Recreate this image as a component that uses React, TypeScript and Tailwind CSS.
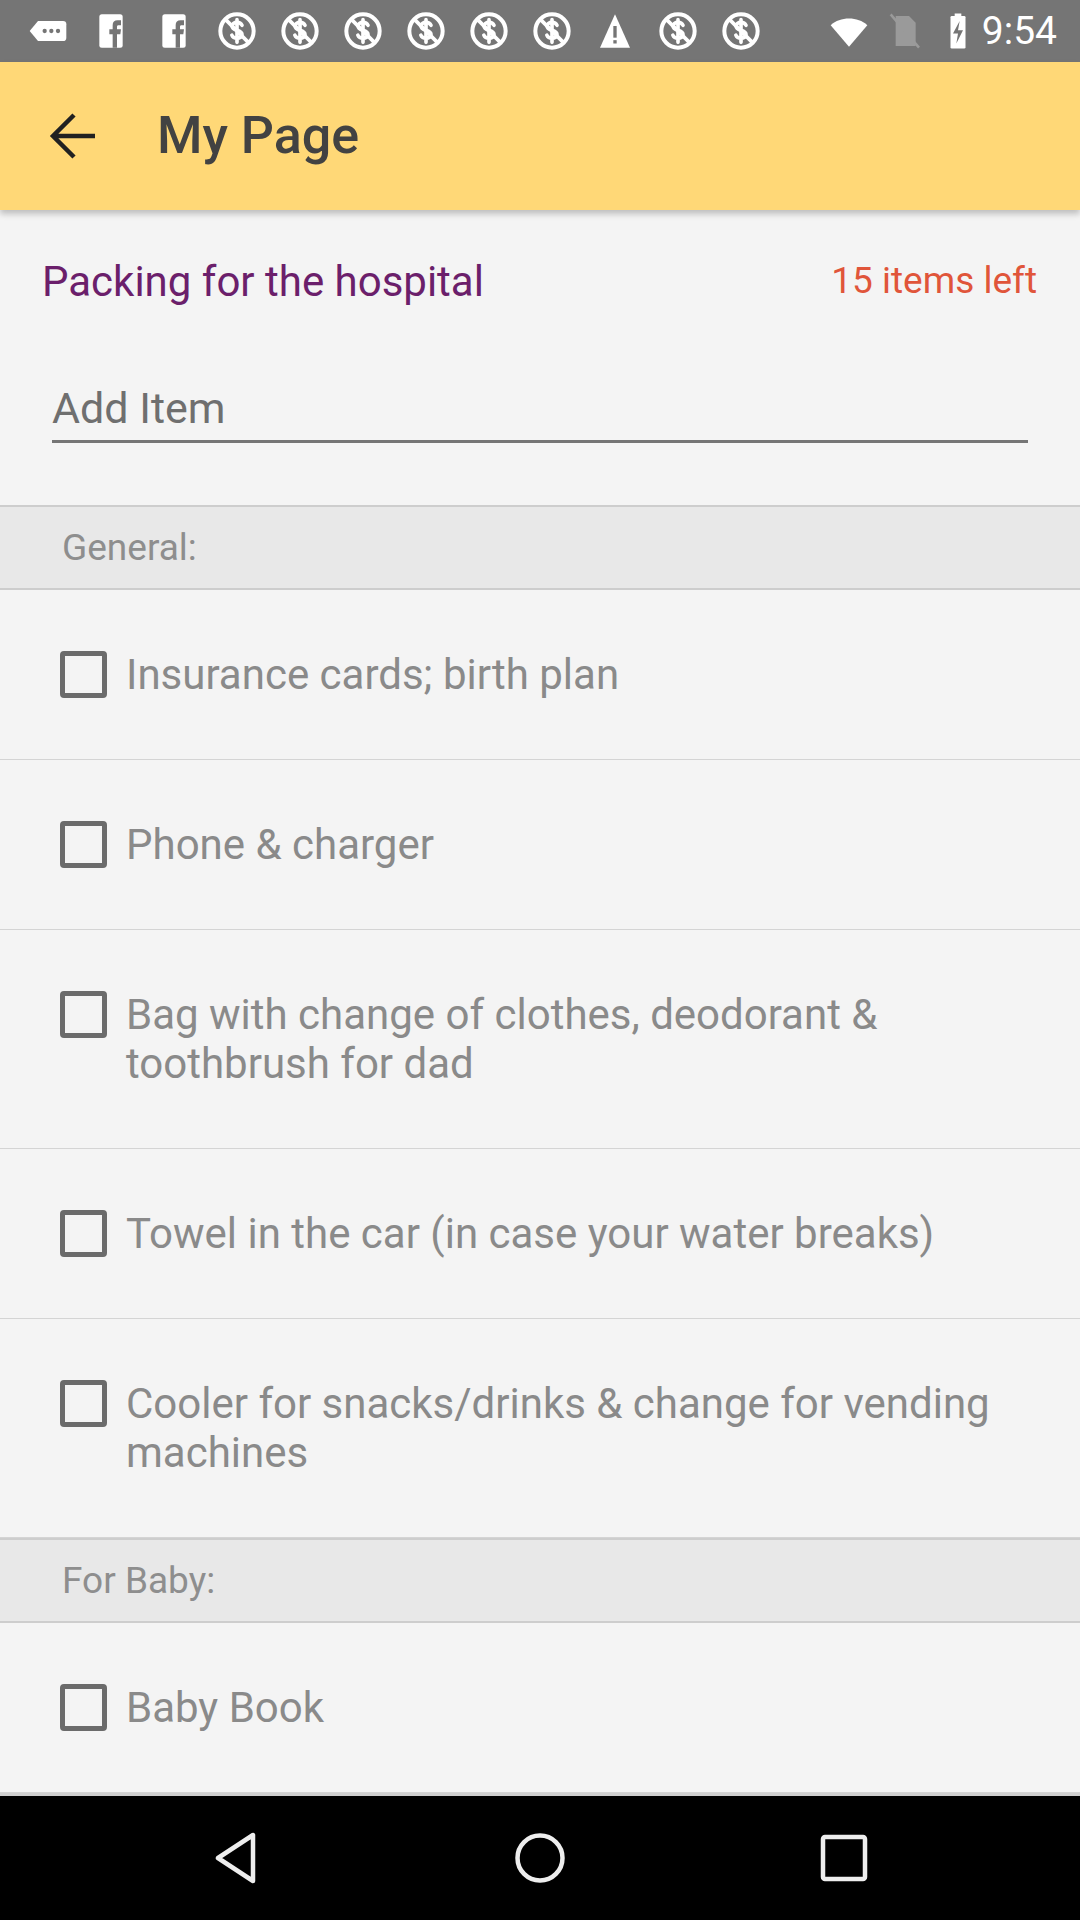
import React from "react";

type Item = { label: string };

const general: Item[] = [
    { label: "Insurance cards; birth plan" },
    { label: "Phone & charger" },
    { label: "Bag with change of clothes, deodorant & toothbrush for dad" },
    { label: "Towel in the car (in case your water breaks)" },
    { label: "Cooler for snacks/drinks & change for vending machines" },
];

const baby: Item[] = [{ label: "Baby Book" }];

function DollarIcon() {
    return (
        <svg width="40" height="40" viewBox="0 0 24 24" fill="none" stroke="white">
            <circle cx="12" cy="12" r="10" strokeWidth="2.4" />
            <path
                d="M15 8.6c-.5-1.1-1.6-1.8-3-1.8-1.7 0-2.9.9-2.9 2.3s1.2 1.9 2.9 2.4 3 1 3 2.5-1.3 2.4-3 2.4c-1.4 0-2.6-.7-3.1-1.9M12 5.2v13.6"
                strokeWidth="2.2"
                strokeLinecap="round"
            />
            <path d="M5.5 5.5l13 13" strokeWidth="2.2" />
        </svg>
    );
}

function FbIcon() {
    return (
        <svg width="40" height="40" viewBox="0 0 24 24">
            <rect x="5" y="2" width="14" height="20" rx="1.5" fill="white" />
            <path d="M13 22v-8h-2v-3h2V8.5C13 6.5 14 5.5 16 5.5h2v3h-1.5c-.6 0-.9.3-.9.9V11H18l-.4 3h-2v8z" fill="#757575" />
        </svg>
    );
}

function TagIcon() {
    return (
        <svg width="40" height="40" viewBox="0 0 24 24">
            <path d="M1 12l5-6h15a2 2 0 012 2v8a2 2 0 01-2 2H6z" fill="white" />
            <circle cx="10" cy="12" r="1.3" fill="#757575" />
            <circle cx="14" cy="12" r="1.3" fill="#757575" />
            <circle cx="18" cy="12" r="1.3" fill="#757575" />
        </svg>
    );
}

function WarnIcon() {
    return (
        <svg width="40" height="40" viewBox="0 0 24 24">
            <path d="M12 2L3 22h18z" fill="white" />
            <rect x="11" y="9" width="2" height="7" fill="#757575" />
            <rect x="11" y="17.5" width="2" height="2" fill="#757575" />
        </svg>
    );
}

function StatusBar() {
    const icons = [
        <TagIcon key="t" />,
        <FbIcon key="f1" />,
        <FbIcon key="f2" />,
        <DollarIcon key="d1" />,
        <DollarIcon key="d2" />,
        <DollarIcon key="d3" />,
        <DollarIcon key="d4" />,
        <DollarIcon key="d5" />,
        <DollarIcon key="d6" />,
        <WarnIcon key="w" />,
        <DollarIcon key="d7" />,
        <DollarIcon key="d8" />,
    ];
    return (
        <div className="h-[62px] bg-[#757575] flex items-center justify-between pl-[16px] pr-[23px]">
            <div className="flex items-center">
                {icons.map((icon, i) => (
                    <div key={i} className="w-[63px] flex justify-center">
                        {icon}
                    </div>
                ))}
            </div>
            <div className="flex items-center">
                <svg width="42" height="40" viewBox="0 0 24 24">
                    <path d="M1 8.5C4 5.8 7.8 4.5 12 4.5s8 1.3 11 4L12 21.5z" fill="white" />
                </svg>
                <svg width="40" height="40" viewBox="0 0 24 24" className="ml-[14px]">
                    <path d="M7 3h8l4 4v14H7z" fill="#9a9a9a" />
                    <path d="M4 2l17 20" stroke="#9a9a9a" strokeWidth="1.5" />
                </svg>
                <svg width="40" height="40" viewBox="0 0 24 24" className="ml-[14px]">
                    <rect x="10" y="1.5" width="4" height="2" fill="white" />
                    <rect x="7.5" y="3" width="9" height="19.5" rx="0.8" fill="white" />
                    <path d="M13 6l-4 7.5h3l-1 6 4-8h-3z" fill="#757575" />
                </svg>
                <span className="ml-[4px] text-white text-[39px] leading-none font-['Roboto',sans-serif]">
                    9:54
                </span>
            </div>
        </div>
    );
}

function AppBar() {
    return (
        <div className="relative z-10 h-[148px] bg-[#ffd877] flex items-center shadow-[0_4px_6px_rgba(0,0,0,0.22)]">
            <svg width="60" height="60" viewBox="0 0 60 60" className="ml-[44px]">
                <path d="M9 30h42M30 9L9 30l21 21" fill="none" stroke="#212121" strokeWidth="4.5" />
            </svg>
            <span className="ml-[53px] text-[52px] font-medium text-[#424242] leading-none">My Page</span>
        </div>
    );
}

function Checkbox() {
    return <div className="w-[47px] h-[47px] shrink-0 mt-[1px] border-[5px] border-[#6b6b6b] rounded-[4px]" />;
}

function Row({ item }: { item: Item }) {
    return (
        <div className="flex items-start pl-[60px] pr-[40px] py-[60px] border-b border-[#d4d4d4]">
            <Checkbox />
            <span className="ml-[19px] text-[42px] leading-[49px] text-[#8a8a8a]">{item.label}</span>
        </div>
    );
}

function Section({ title }: { title: string }) {
    return (
        <div className="h-[85px] shrink-0 flex items-center pl-[62px] bg-[#e8e8e8] border-y-2 border-[#cdcdcd]">
            <span className="text-[37px] text-[#8e8e8e]">{title}</span>
        </div>
    );
}

function NavBar() {
    return (
        <div className="h-[127px] shrink-0 bg-black flex items-center justify-center border-t-[3px] border-[#cfcfcf]">
            <div className="w-[304px] flex justify-center">
                <svg width="44" height="52" viewBox="0 0 44 52">
                    <path d="M39 3v46L4 26z" fill="none" stroke="#eeeeee" strokeWidth="4.5" strokeLinejoin="round" />
                </svg>
            </div>
            <div className="w-[304px] flex justify-center">
                <svg width="52" height="52" viewBox="0 0 52 52">
                    <circle cx="26" cy="26" r="22.5" fill="none" stroke="#eeeeee" strokeWidth="4.5" />
                </svg>
            </div>
            <div className="w-[304px] flex justify-center">
                <svg width="48" height="48" viewBox="0 0 48 48">
                    <rect x="3" y="3" width="42" height="42" rx="2" fill="none" stroke="#eeeeee" strokeWidth="4.5" />
                </svg>
            </div>
        </div>
    );
}

export default function App() {
    return (
        <div className="w-[1080px] h-[1920px] flex flex-col bg-[#f4f4f4] overflow-hidden font-['Roboto',sans-serif]">
            <StatusBar />
            <AppBar />
            <div className="flex-1 flex flex-col overflow-hidden">
                <div className="mt-[40px] h-[62px] flex items-center justify-between pl-[42px] pr-[43px]">
                    <span className="text-[42px] text-[#6b1f6b]">Packing for the hospital</span>
                    <span className="text-[37px] text-[#e0553a]">15 items left</span>
                </div>
                <div className="mt-[70px] mx-[52px] pb-[6px] border-b-[3px] border-[#757575]">
                    <span className="block text-[43px] leading-[52px] text-[#6f6f6f]">Add Item</span>
                </div>
                <div className="mt-[62px]">
                    <Section title="General:" />
                    {general.map((item) => (
                        <Row key={item.label} item={item} />
                    ))}
                    <Section title="For Baby:" />
                    {baby.map((item) => (
                        <Row key={item.label} item={item} />
                    ))}
                </div>
            </div>
            <NavBar />
        </div>
    );
}
